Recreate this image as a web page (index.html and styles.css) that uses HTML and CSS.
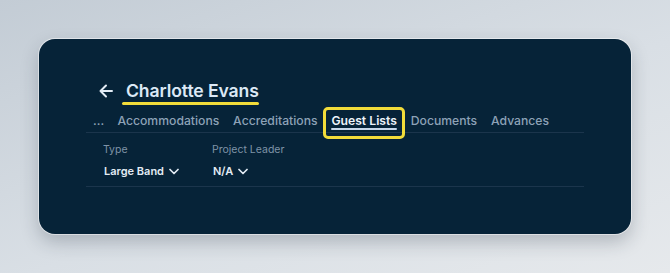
FILE: index.html
```html
<!DOCTYPE html>
<html lang="en">
<head>
    <meta charset="UTF-8">
    <meta name="viewport" content="width=device-width, initial-scale=1.0">
    <title>Charlotte Evans</title>
    <link rel="stylesheet" href="styles.css">
</head>
<body>
    <div class="card">
        <div class="header">
            <svg class="back" width="14" height="14" viewBox="0 0 14 14">
                <path d="M13 7H1.5M7 1.5L1.5 7L7 12.5" fill="none" stroke="#e3ecf5" stroke-width="2" stroke-linecap="round" stroke-linejoin="round"/>
            </svg>
            <h1 class="title">Charlotte Evans</h1>
        </div>

        <nav class="tabs">
            <div class="tab more">...</div>
            <div class="tab">Accommodations</div>
            <div class="tab">Accreditations</div>
            <div class="tab active">Guest Lists</div>
            <div class="tab">Documents</div>
            <div class="tab">Advances</div>
        </nav>

        <div class="fields">
            <div class="field type">
                <div class="label">Type</div>
                <div class="value">Large Band
                    <svg width="10" height="7" viewBox="0 0 10 7"><path d="M1 1.5L5 5.5L9 1.5" fill="none" stroke="#e3ecf5" stroke-width="1.7" stroke-linecap="round" stroke-linejoin="round"/></svg>
                </div>
            </div>
            <div class="field">
                <div class="label">Project Leader</div>
                <div class="value">N/A
                    <svg width="10" height="7" viewBox="0 0 10 7"><path d="M1 1.5L5 5.5L9 1.5" fill="none" stroke="#e3ecf5" stroke-width="1.7" stroke-linecap="round" stroke-linejoin="round"/></svg>
                </div>
            </div>
        </div>
    </div>
</body>
</html>
```

FILE: styles.css
```css
body { margin: 0; height: 273px; font-family: Inter, "Noto Sans", sans-serif; background: linear-gradient(160deg, #c3ccd5 0%, #d9dfe5 55%, #e6e9ec 100%); overflow: hidden; }
.card { margin: 39px 0 0 39px; width: 592px; height: 195px; box-sizing: border-box; padding: 40px 47px 0; background: #062338; border-radius: 16px; box-shadow: 0 0 0 1px rgba(255,255,255,0.5), 0 8px 18px rgba(30,45,60,0.25); }
.header { display: flex; align-items: center; padding-left: 13px; height: 24px; }
.back { margin-right: 9px; }
.title { margin: 0; padding: 0 0 0 4px; font-size: 17.6px; font-weight: 600; color: #dce9f6; line-height: 22px; position: relative; letter-spacing: -0.1px; }
.title::after { content: ""; position: absolute; left: 0; right: 0; bottom: -3px; height: 3px; border-radius: 2px; background: #f2dc3a; }
.tabs { display: flex; gap: 13.8px; margin-top: 7px; padding-left: 7px; height: 22px; border-bottom: 1px solid #1b354c; }
.tab { font-size: 12.2px; font-weight: 500; color: #8da2b7; line-height: 22px; position: relative; }
.tab.more { margin-right: -0.5px; }
.tab.active { color: #eef4fa; font-weight: 600; }
.tab.active::before { content: ""; position: absolute; left: 0; right: 0; bottom: 2px; height: 2px; background: #c7d8ea; border-radius: 1px; }
.tab.active::after { content: ""; position: absolute; left: -8px; right: -8px; top: -3px; bottom: -7px; border: 3px solid #f2dc3a; border-radius: 5px; }
.fields { display: flex; padding: 9px 0 0 17px; height: 44px; border-bottom: 1px solid #1b354c; }
.field.type { width: 109px; }
.label { font-size: 10.5px; color: #7f93a7; line-height: 16px; }
.value { display: flex; align-items: center; gap: 5px; margin-top: 5px; padding-left: 1px; font-size: 11px; font-weight: 600; color: #e3ecf5; line-height: 16px; }
```
